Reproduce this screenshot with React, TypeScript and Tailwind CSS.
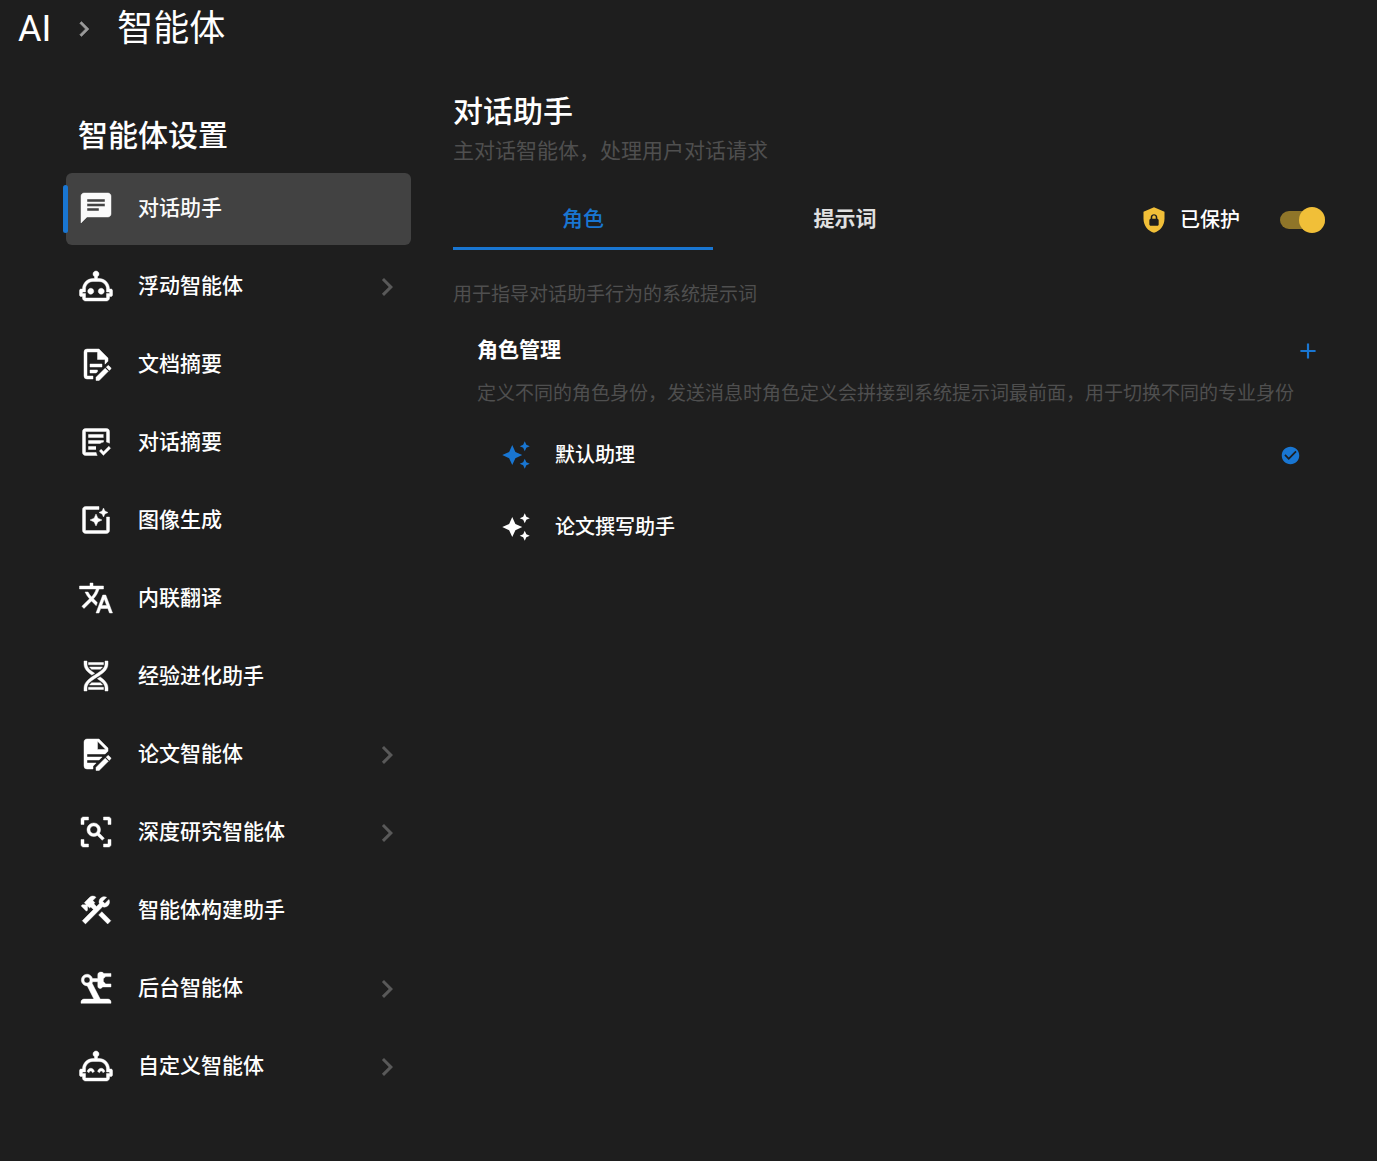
import { useState } from 'react';
import { MdAutoAwesome, MdCheckCircle } from 'react-icons/md';

const ROBOT_HEAD =
  'M23 15V18C23 18.55 22.55 19 22 19H21V20C21 21.11 20.11 22 19 22H5C3.9 22 3 21.11 3 20V19H2C1.45 19 1 18.55 1 18V15C1 14.45 1.45 14 2 14H3C3 10.13 6.13 7 10 7H11V5.73C10.4 5.39 10 4.74 10 4C10 2.9 10.9 2 12 2S14 2.9 14 4C14 4.74 13.6 5.39 13 5.73V7H14C17.87 7 21 10.13 21 14H22C22.55 14 23 14.45 23 15M21 16H19V14C19 11.24 16.76 9 14 9H10C7.24 9 5 11.24 5 14V16H3V17H5V20H19V17H21V16Z';

const paths = {
  chat: 'M20 2H4c-1.1 0-1.99.9-1.99 2L2 22l4-4h14c1.1 0 2-.9 2-2V4c0-1.1-.9-2-2-2zM6 9h12v2H6V9zm8 5H6v-2h8v2zm4-6H6V6h12v2z',
  photoFilter:
    'M19.02 10v9H5V5h9V3H5.02c-1.1 0-2 .9-2 2v14c0 1.1.9 2 2 2H19c1.1 0 2-.9 2-2v-9h-1.98zM17 10l.94-2.06L20 7l-2.06-.94L17 4l-.94 2.06L14 7l2.06.94zm-3.75.75L12 8l-1.25 2.75L8 12l2.75 1.25L12 16l1.25-2.75L16 12z',
  translate:
    'M12.87 15.07l-2.54-2.51.03-.03c1.74-1.94 2.98-4.17 3.71-6.53H17V4h-7V2H8v2H1v1.99h11.17C11.5 7.92 10.44 9.75 9 11.35 8.07 10.32 7.3 9.19 6.69 8h-2c.73 1.63 1.73 3.17 2.98 4.56l-5.09 5.02L4 19l5-5 3.11 3.11.76-2.04zM18.5 10h-2L12 22h2l1.12-3h4.75L21 22h2l-4.5-12zm-2.62 7l1.62-4.33L19.12 17h-3.24z',
  robot:
    ROBOT_HEAD +
    'M17.5 15.5C17.5 16.61 16.61 17.5 15.5 17.5S13.5 16.61 13.5 15.5 14.4 13.5 15.5 13.5 17.5 14.4 17.5 15.5M8.5 13.5C7.4 13.5 6.5 14.4 6.5 15.5S7.4 17.5 8.5 17.5 10.5 16.61 10.5 15.5 9.61 13.5 8.5 13.5',
  robotHappy:
    ROBOT_HEAD +
    'M8.5 13.5C7.3 13.5 6.3 14.45 6.1 15.7L7.4 16.5C7.4 15.8 7.9 15.3 8.5 15.3S9.6 15.8 9.6 16.5L10.9 15.7C10.7 14.45 9.7 13.5 8.5 13.5ZM15.5 13.5C14.3 13.5 13.3 14.45 13.1 15.7L14.4 16.5C14.4 15.8 14.9 15.3 15.5 15.3S16.6 15.8 16.6 16.5L17.9 15.7C17.7 14.45 16.7 13.5 15.5 13.5Z',
  docEditOutline:
    'M8,12H16V14H8V12M10,20H6V4H13V9H18V12.1L20,10.1V8L14,2H6A2,2 0 0,0 4,4V20A2,2 0 0,0 6,22H10V20M8,18H12.1L13,17.1V16H8V18M20.2,13C20.3,13 20.5,13.1 20.6,13.2L21.9,14.5C22.1,14.7 22.1,15.1 21.9,15.3L20.9,16.3L18.8,14.2L19.8,13.2C19.9,13.1 20,13 20.2,13M20.2,16.9L14.1,23H12V20.9L18.1,14.8L20.2,16.9Z',
  docEdit:
    'M6,2C4.89,2 4,2.89 4,4V20A2,2 0 0,0 6,22H10V20.09L12.09,18H6V16H14.09L16.09,14H6V12H18.09L20,10.09V8L14,2H6M13,3.5L18.5,9H13V3.5M20.15,13C20,13 19.86,13.05 19.75,13.16L18.73,14.18L20.82,16.26L21.84,15.25C22.05,15.03 22.05,14.67 21.84,14.46L20.54,13.16C20.43,13.05 20.29,13 20.15,13M18.14,14.77L12,20.92V23H14.08L20.23,16.85L18.14,14.77Z',
  textCheck:
    'M17,21L14.25,18L15.41,16.84L17,18.43L20.59,14.84L21.75,16.25M12.8,21H5C3.89,21 3,20.11 3,19V5C3,3.89 3.89,3 5,3H19C20.11,3 21,3.89 21,5V12.8C20.39,12.45 19.72,12.2 19,12.08V5H5V19H12.08C12.2,19.72 12.45,20.39 12.8,21M12,17H7V15H12M14.68,13H7V11H17V12.08C16.15,12.22 15.37,12.54 14.68,13M17,9H7V7H17',
  dna: 'M4,2H6V4C6,5.44 6.68,6.61 7.88,7.78C8.74,8.61 9.89,9.41 11.09,10.2L9.26,11.39C8.27,10.72 7.31,10 6.5,9.21C5.07,7.82 4,6.1 4,4V2M18,2H20V4C20,6.1 18.93,7.82 17.5,9.21C16.09,10.58 14.29,11.73 12.54,12.84C10.79,13.96 9.09,15.05 7.88,16.22C6.68,17.39 6,18.56 6,20V22H4V20C4,17.9 5.07,16.18 6.5,14.79C7.91,13.42 9.71,12.27 11.46,11.16C13.21,10.04 14.91,8.95 16.12,7.78C17.32,6.61 18,5.44 18,4V2M14.74,12.61C15.73,13.28 16.69,14 17.5,14.79C18.93,16.18 20,17.9 20,20V22H18V20C18,18.56 17.32,17.39 16.12,16.22C15.26,15.39 14.11,14.59 12.91,13.8L14.74,12.61M7,3H17V4L16.94,4.5H7.06L7,4V3M7.68,6H16.32C16.08,6.34 15.8,6.69 15.42,7.06L14.91,7.5H9.07L8.58,7.06C8.2,6.69 7.92,6.34 7.68,6M9.09,16.5H14.93L15.42,16.94C15.8,17.31 16.08,17.66 16.32,18H7.68C7.92,17.66 8.2,17.31 8.58,16.94L9.09,16.5M7.06,19.5H16.94L17,20V21H7V20L7.06,19.5Z',
  scan: 'M17 22V20H20V17H22V20.5C22 20.89 21.84 21.24 21.54 21.54C21.24 21.84 20.89 22 20.5 22H17M7 22H3.5C3.11 22 2.76 21.84 2.46 21.54C2.16 21.24 2 20.89 2 20.5V17H4V20H7V22M17 2H20.5C20.89 2 21.24 2.16 21.54 2.46C21.84 2.76 22 3.11 22 3.5V7H20V4H17V2M7 2V4H4V7H2V3.5C2 3.11 2.16 2.76 2.46 2.46C2.76 2.16 3.11 2 3.5 2H7M10.5 6C13 6 15 8 15 10.5C15 11.38 14.75 12.2 14.31 12.9L17.57 16.16L16.16 17.57L12.9 14.31C12.2 14.75 11.38 15 10.5 15C8 15 6 13 6 10.5C6 8 8 6 10.5 6M10.5 8C9.12 8 8 9.12 8 10.5C8 11.88 9.12 13 10.5 13C11.88 13 13 11.88 13 10.5C13 9.12 11.88 8 10.5 8Z',
  hammerWrench:
    'M13.78 15.3L19.78 21.3L21.89 19.14L15.89 13.14L13.78 15.3M17.5 10.1C17.11 10.1 16.69 10.05 16.36 9.91L4.97 21.25L2.86 19.14L10.27 11.74L8.5 9.96L7.78 10.66L6.33 9.25V12.11L5.63 12.81L2.11 9.25L2.81 8.55H5.62L4.22 7.14L7.78 3.58C8.95 2.41 10.83 2.41 12 3.58L9.89 5.74L11.3 7.14L10.59 7.85L12.38 9.63L14.2 7.75C14.06 7.42 14 7 14 6.63C14 4.66 15.56 3.11 17.5 3.11C18.09 3.11 18.61 3.25 19.08 3.53L16.41 6.2L17.91 7.7L20.58 5.03C20.86 5.5 21 6 21 6.63C21 8.55 19.45 10.1 17.5 10.1Z',
  robotArm:
    'M6 2.8A3.9 3.9 0 0 0 6.2 10.6L10.6 19.4H4C2.9 19.4 2 20.3 2 21.4V22.2H22V21.4C22 20.3 21.1 19.4 20 19.4H14.8L9.4 8.9L9.7 7.8H13.2V10.7C13.2 11.7 13.7 12.3 14.7 12.3C15.6 12.3 16.1 11.9 16.2 11.3H22V9.3H18.5L16.9 7.7V5.8L18.5 4.4H22V2.3H17.2C16.8 1.7 16.1 1.4 15.2 1.4C14 1.4 13.2 2.1 13.2 3.2V5.7H9.7C9.1 3.9 7.7 2.8 6 2.8M6 4.7A2 2 0 1 1 6 8.7A2 2 0 0 1 6 4.7Z',
  chevron: 'M8.59,16.58L13.17,12L8.59,7.41L10,6L16,12L10,18L8.59,16.58Z',
  plus: 'M19,13H13V19H11V13H5V11H11V5H13V11H19V13Z',
  shieldLock:
    'M12,1L3,5V11C3,16.55 6.84,21.74 12,23C17.16,21.74 21,16.55 21,11V5L12,1M12,7C13.4,7 14.8,8.1 14.8,9.5V11C15.4,11 16,11.6 16,12.3V15.8C16,16.4 15.4,17 14.7,17H9.2C8.6,17 8,16.4 8,15.7V12.2C8,11.6 8.6,11 9.2,11V9.5C9.2,8.1 10.6,7 12,7M12,8.2C11.2,8.2 10.5,8.7 10.5,9.5V11H13.5V9.5C13.5,8.7 12.8,8.2 12,8.2Z',
};

type IconName = keyof typeof paths;

interface IconProps {
  name: IconName;
  className?: string;
}

function Icon({ name, className = '' }: IconProps) {
  return (
    <svg viewBox="0 0 24 24" fill="currentColor" aria-hidden="true" className={`shrink-0 ${className}`}>
      <path d={paths[name]} />
    </svg>
  );
}

const agents: { label: string; icon: IconName; expandable?: boolean }[] = [
  { label: '对话助手', icon: 'chat' },
  { label: '浮动智能体', icon: 'robot', expandable: true },
  { label: '文档摘要', icon: 'docEditOutline' },
  { label: '对话摘要', icon: 'textCheck' },
  { label: '图像生成', icon: 'photoFilter' },
  { label: '内联翻译', icon: 'translate' },
  { label: '经验进化助手', icon: 'dna' },
  { label: '论文智能体', icon: 'docEdit', expandable: true },
  { label: '深度研究智能体', icon: 'scan', expandable: true },
  { label: '智能体构建助手', icon: 'hammerWrench' },
  { label: '后台智能体', icon: 'robotArm', expandable: true },
  { label: '自定义智能体', icon: 'robotHappy', expandable: true },
];

const tabs = ['角色', '提示词'];
const roles = ['默认助理', '论文撰写助手'];

function Breadcrumb() {
  return (
    <header className="flex h-[58px] items-center px-[18px] text-4xl">
      <a href="#ai">AI</a>
      <Icon name="chevron" className="mx-[18px] size-[30px] stroke-current text-[#9a9a9a] [stroke-width:0.4]" />
      <h1>智能体</h1>
    </header>
  );
}

function Sidebar() {
  const [active, setActive] = useState(0);

  return (
    <aside className="w-[345px] shrink-0 pt-[60px]">
      <h2 className="mb-[19px] pl-3 text-[30px] leading-9 font-medium">智能体设置</h2>
      <nav className="flex flex-col gap-[6px]">
        {agents.map((agent, i) => (
          <button
            key={agent.label}
            onClick={() => setActive(i)}
            className={`relative flex h-[72px] items-center rounded-md px-3 text-[21px] font-medium ${
              i === active ? 'bg-[#424242] text-[#fafafa]' : ''
            }`}
          >
            {i === active && <span className="absolute top-3 -left-[3px] h-12 w-[5px] rounded-sm bg-[#1976d2]" />}
            {/* thin outline so the icons weigh the same as the medium labels */}
            <Icon name={agent.icon} className="mb-0.5 size-9 stroke-current [stroke-width:0.3]" />
            <span className="ml-6">{agent.label}</span>
            {agent.expandable && <Icon name="chevron" className="-mr-[6px] ml-auto size-9 text-[#595959]" />}
          </button>
        ))}
      </nav>
    </aside>
  );
}

function ProtectToggle() {
  const [on, setOn] = useState(true);

  return (
    <label className="mr-6 ml-auto flex cursor-pointer items-center text-xl font-medium">
      <Icon name="shieldLock" className="mr-3 size-7 text-[#f1bf38]" />
      已保护
      <input
        type="checkbox"
        checked={on}
        onChange={(e) => setOn(e.target.checked)}
        className="peer sr-only"
      />
      <span className="ml-10 flex h-[18px] w-[45px] items-center rounded-full bg-gray-600 peer-checked:justify-end peer-checked:bg-[#8f7529]">
        <span className={`size-[26px] shrink-0 rounded-full ${on ? 'bg-[#f1bf38]' : 'bg-gray-300'}`} />
      </span>
    </label>
  );
}

function RoleSection() {
  const [selected, setSelected] = useState(0);

  return (
    <section className="mt-[25px] px-6">
      <div className="flex h-[34px] items-center justify-between">
        <h3 className="text-[21px] font-bold">角色管理</h3>
        <button aria-label="添加角色" className="flex size-[34px] items-center justify-center text-[#1976d2]">
          <Icon name="plus" className="size-[26px]" />
        </button>
      </div>
      <p className="mt-3 text-[19px] leading-7 text-[#4f4f4f]">
        定义不同的角色身份，发送消息时角色定义会拼接到系统提示词最前面，用于切换不同的专业身份
      </p>
      <div className="mt-[11px] flex flex-col">
        {roles.map((role, i) => (
          <button
            key={role}
            onClick={() => setSelected(i)}
            className="flex h-[72px] items-center px-6 text-xl font-medium"
          >
            <MdAutoAwesome className={`size-[30px] ${i === selected ? 'text-[#1976d2]' : ''}`} />
            <span className="ml-6">{role}</span>
            {i === selected && <MdCheckCircle className="ml-auto size-[21px] text-[#1976d2]" />}
          </button>
        ))}
      </div>
    </section>
  );
}

function AgentPanel() {
  const [tab, setTab] = useState(0);

  return (
    <main className="min-w-0 flex-1 pt-[33px]">
      <h2 className="text-[30px] leading-[42px] font-medium">对话助手</h2>
      <p className="mt-0.5 text-[21px] leading-8 text-[#4f4f4f]">主对话智能体，处理用户对话请求</p>
      <div className="mt-[23px] flex h-[60px]">
        <div role="tablist" className="flex gap-0.5">
          {tabs.map((label, i) => (
            <button
              key={label}
              role="tab"
              aria-selected={i === tab}
              onClick={() => setTab(i)}
              className={`w-[260px] border-y-[3px] border-t-transparent text-[21px] ${
                i === tab
                  ? 'border-b-[#1976d2] font-medium text-[#1976d2]'
                  : 'border-b-transparent font-bold text-[#e0e0e0]'
              }`}
            >
              {label}
            </button>
          ))}
        </div>
        <ProtectToggle />
      </div>
      <p className="mt-[31px] text-[19px] leading-7 text-[#4f4f4f]">用于指导对话助手行为的系统提示词</p>
      <RoleSection />
    </main>
  );
}

export default function App() {
  return (
    <div
      lang="zh-CN"
      className="min-h-screen bg-[#1e1e1e] font-[Roboto,'Noto_Sans_CJK_SC',sans-serif] text-white"
    >
      <Breadcrumb />
      <div className="flex gap-[42px] pr-7 pl-[66px]">
        <Sidebar />
        <AgentPanel />
      </div>
    </div>
  );
}
